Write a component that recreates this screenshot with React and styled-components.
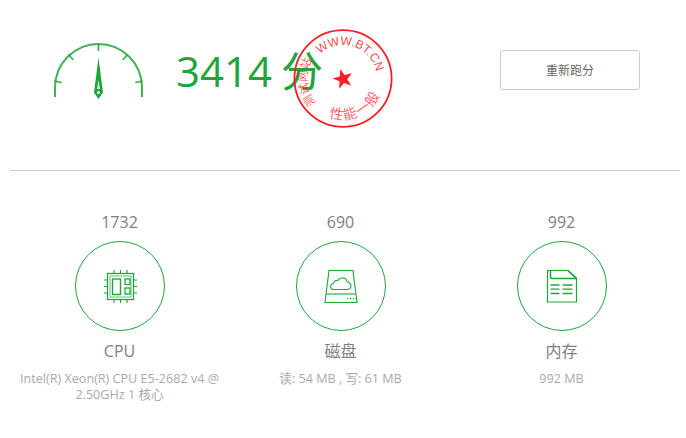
import React from "react";
import styled, { createGlobalStyle } from "styled-components";

const Global = createGlobalStyle`
  html, body { margin: 0; padding: 0; background: #fff; }
  body { font-family: "Open Sans", "Noto Sans CJK SC", sans-serif; }
`;

const Page = styled.div`
  width: 686px;
  height: 438px;
  overflow: hidden;
  padding: 0 6px 0 10px;
  box-sizing: border-box;
`;

const Header = styled.div`
  position: relative;
  height: 170px;
  border-bottom: 1px solid #ccc9d2;
  box-sizing: content-box;
  display: flex;
  align-items: flex-start;
`;

const Gauge = styled.svg`
  display: block;
  width: 89px;
  height: 57px;
  margin: 43px 0 0 44px;
  flex: none;
`;

const Score = styled.div`
  margin: 41px 0 0 33px;
  font-size: 42px;
  word-spacing: -2px;
  line-height: 60px;
  color: #20a53a;
  white-space: nowrap;
  flex: none;
  width: 324px;
`;

const Stamp = styled.svg`
  position: absolute;
  left: 282px;
  top: 27px;
  width: 102px;
  height: 102px;
  overflow: visible;
`;

const Retest = styled.button`
  width: 140px;
  height: 40px;
  margin-top: 50px;
  border: 1px solid #ccc9d2;
  border-radius: 3px;
  background: #fff;
  color: #666;
  font: 12px "Open Sans", "Noto Sans CJK SC", sans-serif;
  flex: none;
`;

const Stats = styled.div`
  display: grid;
  grid-template-columns: repeat(3, 221px);
  margin: 40px 0 0 -1px;
`;

const Stat = styled.div`
  display: flex;
  flex-direction: column;
  align-items: center;
  text-align: center;
`;

const Value = styled.div`
  font-size: 16px;
  line-height: 22px;
  color: #808080;
`;

const Ring = styled.div`
  width: 90px;
  height: 90px;
  margin-top: 8px;
  border: 1px solid #20a53a;
  border-radius: 50%;
  box-sizing: border-box;
  display: flex;
  align-items: center;
  justify-content: center;
`;

const Icon = styled.svg`
  width: 34px;
  height: 34px;
  display: block;
`;

const Name = styled.div`
  margin-top: 9px;
  font-size: 16px;
  line-height: 22px;
  color: #808080;
`;

const Detail = styled.div`
  margin-top: 9px;
  width: 221px;
  font-size: 12.6px;
  line-height: 16px;
  color: #aaa;
`;

const G = "#20a53a";

const GaugeIcon = () => (
  <Gauge viewBox="0 0 89 57" fill="none" stroke={G}>
    <path d="M1 54V44.5A43.5 43.5 0 0 1 88 44.5V54" strokeWidth="2" opacity=".85" />
    <path d="M44.5 0.5V8M14.3 11.3L19.3 17M73.7 11.3L68.7 17M0.5 38L7.7 39.7M88.5 38L81.3 39.7" strokeWidth="1.7" opacity=".85" />
    <path d="M44.5 14.5L49 49.5L44.5 56L40 49.5Z" fill={G} stroke="none" />
    <path d="M44.5 37L45.9 46H43.1Z" fill="#fff" stroke="none" opacity=".9" />
    <circle cx="44.5" cy="49.6" r="1.5" fill="#fff" stroke="none" />
  </Gauge>
);

const CpuIcon = () => (
  <Icon viewBox="0 0 34 34" fill="none" stroke={G} strokeWidth="1.1">
    <rect x="4.5" y="4.5" width="26" height="26" strokeWidth="1.3" />
    <rect x="7" y="7" width="21" height="21" strokeWidth=".7" />
    <rect x="9.5" y="10" width="8" height="15.5" strokeWidth="1.4" />
    <rect x="22" y="10" width="5" height="5.5" strokeWidth="1.3" />
    <rect x="22" y="19" width="5" height="6" strokeWidth="1.3" />
    <path d="M11 1V4M17.5 1V4M24 1V4M11 31V34M17.5 31V34M24 31V34M1 11H4M1 17.5H4M1 24H4M31 11H34M31 17.5H34M31 24H34" />
  </Icon>
);

const DiskIcon = () => (
  <Icon viewBox="0 0 34 34" fill="none" stroke={G} strokeWidth="1">
    <path d="M5 1.5H29L33 33.5H1Z" strokeWidth="1.1" />
    <path d="M2.4 25H31.6" strokeWidth="1.1" />
    <path d="M9.5 20.5C6 20.5 5.5 15 9.5 14.5C10 11.5 12.5 11 14 11.5C15.5 8 22 8 23 12.5C24.5 13 27 14 27 17C27 19.5 25 20.5 23 20.5Z" strokeWidth="1.1" />
    <path d="M23 29.5H24.2M26 29.5H27.2M29 29.5H30.2" strokeWidth="1.1" />
  </Icon>
);

const MemIcon = () => (
  <Icon viewBox="0 0 34 34" fill="none" stroke={G} strokeWidth="1.2">
    <path d="M2.5 1.5H23L31.5 9.5V33H2.5Z" strokeWidth="1.2" />
    <path d="M5.5 1.5V8C5.5 9 6 9.5 7.5 9.5H31.5" strokeWidth="1.5" />
    <path d="M23 1.5L31.5 9.5" strokeWidth="1.6" />
    <path d="M5.5 16H14.5M17.5 16H27.5M5.5 20.2H14.5M17.5 20.2H27.5M5.5 24.5H14.5M17.5 24.5H27.5" strokeWidth="1.3" />
  </Icon>
);

const R = "#ff1c24";
const StampArt = () => (
  <Stamp viewBox="0 0 102 102" fill="none">
    <defs>
      <path id="cjkArc" d="M24 76A36 36 0 0 1 21 32" />
      <path id="latinArc" d="M27.8 27.1A34 34 0 0 1 85 52" />
      <path id="botArc" d="M37 90A40 40 0 0 0 90.5 58" />
    </defs>
    <ellipse cx="51" cy="51.5" rx="48.6" ry="48.4" stroke={R} strokeWidth="1.8" />
    <text fill={R} fillOpacity=".75" fontFamily="'Noto Sans CJK SC',sans-serif" fontSize="11.5">
      <textPath href="#cjkArc">测试网站</textPath>
    </text>
    <text fill={R} fillOpacity=".85" fontFamily="'Liberation Sans',sans-serif" fontSize="12">
      <textPath href="#latinArc">WWW.BT.CN</textPath>
    </text>
    <polygon
      fill={R}
      points="48.3,41.9 52.5,48.1 59.8,46.3 55.2,52.2 59.2,58.6 52.1,56.1 47.2,61.8 47.5,54.3 40.5,51.5 47.7,49.4"
    />
    <text fill={R} fillOpacity=".72" fontFamily="'Noto Sans CJK SC',sans-serif" fontSize="14" letterSpacing="1.5">
      <textPath href="#botArc">性能一般</textPath>
    </text>
  </Stamp>
);

const stats = [
  { value: "1732", name: "CPU", Art: CpuIcon, lines: ["Intel(R) Xeon(R) CPU E5-2682 v4 @", "2.50GHz 1 核心"] },
  { value: "690", name: "磁盘", Art: DiskIcon, lines: ["读: 54 MB , 写: 61 MB"] },
  { value: "992", name: "内存", Art: MemIcon, lines: ["992 MB"] },
];

export default function App() {
  return (
    <Page>
      <Global />
      <Header>
        <GaugeIcon />
        <Score>3414 分</Score>
        <Retest>重新跑分</Retest>
        <StampArt />
      </Header>
      <Stats>
        {stats.map(({ value, name, Art, lines }) => (
          <Stat key={name}>
            <Value>{value}</Value>
            <Ring><Art /></Ring>
            <Name>{name}</Name>
            <Detail>{lines.map((l) => <div key={l}>{l}</div>)}</Detail>
          </Stat>
        ))}
      </Stats>
    </Page>
  );
}
